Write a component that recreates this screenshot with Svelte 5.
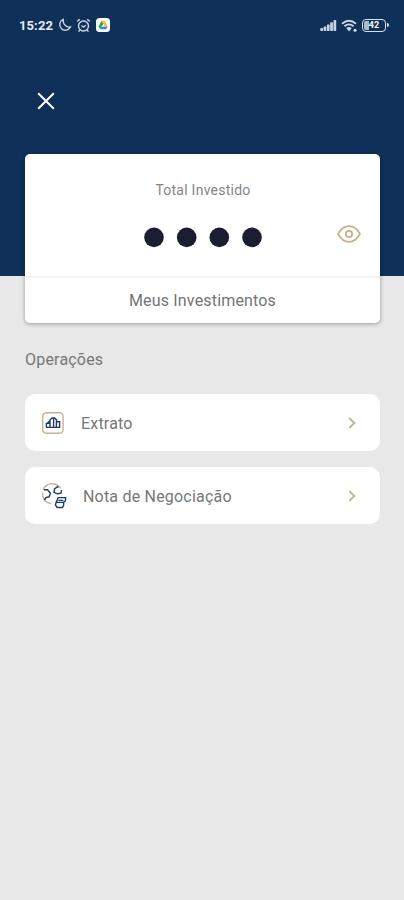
<script>
  let hidden = true;

  const dots = [10, 42.7, 75.3, 108];
  const operations = [
    { id: "extrato", label: "Extrato" },
    { id: "nota", label: "Nota de Negociação" },
  ];
</script>

<div class="screen">
  <header>
    <div class="status">
      <span class="time">15:22</span>
      <svg class="moon" width="14" height="14" viewBox="0 0 14 14">
        <path d="M5.2 1.4A5.6 5.6 0 1 0 12.4 9C9 9.8 4.6 6.8 5.2 1.4Z" />
      </svg>
      <svg class="alarm" width="15" height="15" viewBox="0 0 15 15">
        <circle cx="7.5" cy="8" r="5" />
        <path d="M1.2 3.4 3.8 1.4M13.8 3.4 11.2 1.4M5.5 7.5 7.4 9.2 9.8 7.3M3.8 12 2.6 13.6M11.2 12l1.2 1.6" />
      </svg>
      <svg class="drive" width="14" height="14" viewBox="0 0 14 14">
        <rect width="14" height="14" rx="3.5" fill="#fff" />
        <path d="M5.5 2.8 2.4 8.7 4.1 11.3 7.4 5.6Z" fill="#2fa35b" />
        <path d="M5.5 2.8H8.5L11.8 8.7H8.7Z" fill="#f9bd20" />
        <path d="M5.4 8.7H11.8L10.1 11.3H4.1Z" fill="#3e7fe8" />
      </svg>
      <div class="right">
        <svg class="signal" width="17" height="13" viewBox="0 0 17 13">
          <rect x="0.3" y="9" width="2.7" height="3" rx="0.7" />
          <rect x="3.6" y="7.5" width="2.7" height="4.5" rx="0.7" />
          <rect x="6.9" y="5.5" width="2.7" height="6.5" rx="0.7" />
          <rect x="10.2" y="3.3" width="2.7" height="8.7" rx="0.7" />
          <rect x="13.5" y="1" width="2.7" height="11" rx="0.7" />
        </svg>
        <svg class="wifi" width="17" height="14" viewBox="0 0 17 14">
          <path d="M1 4.8Q8 -1.3 15 4.8M3.4 7.3Q8 3.4 12.6 7.3M5.8 9.7Q8 8 10.2 9.7" />
          <path class="fill" d="M6 9.7h4L8 12.6Z" />
          <circle class="fill" cx="14" cy="11.3" r="1.5" />
        </svg>
        <div class="battery"><span>42</span></div>
      </div>
    </div>
    <button class="close" aria-label="Fechar">
      <svg width="18" height="18" viewBox="0 0 18 18">
        <path d="M1.2 1.2 16.8 16.8M16.8 1.2 1.2 16.8" />
      </svg>
    </button>
  </header>

  <main>
    <section class="card">
      <div class="total">
        <div class="total-label">Total Investido</div>
        <div class="amount">
          <svg class="dots" width="118" height="24" viewBox="0 0 118 24">
            {#if hidden}
              {#each dots as x}
                <circle cx={x} cy="12.4" r="9.8" />
              {/each}
            {/if}
          </svg>
          <button class="eye" aria-label="Mostrar saldo" on:click={() => (hidden = !hidden)}>
            <svg width="24" height="18" viewBox="0 0 24 18">
              <path d="M1 9C4 3.7 7.5 1.2 12 1.2S20 3.7 23 9C20 14.3 16.5 16.8 12 16.8S4 14.3 1 9Z" />
              <circle cx="12" cy="9" r="3.2" />
            </svg>
          </button>
        </div>
      </div>
      <div class="investments">Meus Investimentos</div>
    </section>

    <h2>Operações</h2>

    {#each operations as operation}
      <div class="row {operation.id}">
        {#if operation.id === "extrato"}
          <svg class="icon" width="24" height="24" viewBox="0 0 24 24">
            <rect class="gold" x="1.7" y="1.7" width="20.4" height="20.6" rx="3.8" />
            <path class="navy" d="M5.4 16.4V12.4H9V16.4M9 12.4V9L11 7H13.6L15.6 9V10.8M12.6 7.5V16.4M15.4 16.4V10.8H18.6V16.4H5M6.5 12 9 9.8" />
          </svg>
        {:else}
          <svg class="icon" width="26" height="27" viewBox="0 0 26 27">
            <path class="gold" d="M2 8C4 3.5 7 1.7 11 1.7C15 1.7 17.8 3.5 19.6 6.3M1.5 10.5C1.3 17 4.2 21 10.4 21.7" />
            <path class="navy" d="M3 7.8 6.6 7.8 9.4 11.4 8 14.8 5 15.6 3.4 18M17 4.3 13.6 7 13 10.4 16.5 11.8 20 11.2 20.5 8.2M15.4 5.4 17.5 4.8" />
            <path class="navy" d="M17.2 15.6H24.6L24.4 19.2 22.4 20.4H15.2ZM15.2 20.4 14.4 22.8 16.2 25.5H21.4L22.6 23.6V20.4M17.4 18.4H22.4" />
          </svg>
        {/if}
        <span>{operation.label}</span>
        <svg class="chevron" width="8" height="12" viewBox="0 0 8 12">
          <path d="M1.3 1 6.4 6 1.3 11" />
        </svg>
      </div>
    {/each}
  </main>
</div>

<style>
  :global(body) {
    background: #e8e8e8;
  }

  .screen {
    min-height: 900px;
    background: #e8e8e8;
    font-family: Roboto, sans-serif;
    color: #777;
  }

  header {
    height: 276px;
    background: #0f3058;
  }

  svg {
    display: block;
    flex: none;
    fill: none;
  }

  button {
    display: block;
    padding: 0;
    border: 0;
    background: none;
  }

  .status {
    display: flex;
    align-items: center;
    height: 18px;
    padding: 16px 15px 0 19px;
  }

  .time {
    width: 39px;
    color: #e8edf3;
    font-size: 13px;
    font-weight: 700;
    letter-spacing: 0.1px;
  }

  .moon,
  .alarm,
  .wifi {
    stroke: #cbd5e1;
    stroke-width: 1.4;
  }

  .alarm {
    margin-left: 4px;
  }

  .drive {
    margin-left: 5px;
  }

  .right {
    display: flex;
    align-items: center;
    margin-left: auto;
  }

  .signal {
    fill: #cbd5e1;
  }

  .wifi {
    margin: 1px 4px 0 4px;
    stroke-width: 1.8;
  }

  .fill {
    fill: #dce3ec;
    stroke: none;
  }

  .battery {
    position: relative;
    box-sizing: border-box;
    width: 24px;
    height: 13px;
    margin-right: 3px;
    padding: 1px;
    border: 1.5px solid #dce3ec;
    border-radius: 4px;
  }

  .battery::after {
    content: "";
    position: absolute;
    top: 3px;
    right: -4px;
    width: 2px;
    height: 4px;
    border-radius: 0 2px 2px 0;
    background: #dce3ec;
  }

  .battery span {
    display: block;
    height: 9px;
    border-radius: 2px;
    background: linear-gradient(90deg, #aebccc 25%, transparent 25%);
    color: #fff;
    font-size: 9px;
    font-weight: 700;
    line-height: 9px;
    text-align: center;
  }

  .close {
    margin: 58px 0 0 37px;
  }

  .close svg {
    stroke: #fff;
    stroke-width: 2;
  }

  main {
    margin-top: -122px;
    padding: 0 24px 0 25px;
  }

  .card {
    height: 169px;
    border-radius: 5px;
    background: #fff;
    box-shadow: 0 1px 4px rgba(0, 0, 0, 0.35);
  }

  .total {
    box-sizing: border-box;
    height: 124px;
    padding-top: 27px;
    border-bottom: 2px solid #f2f2f2;
  }

  .total-label {
    padding-left: 1px;
    color: #858585;
    font-size: 14px;
    line-height: 18px;
    letter-spacing: 0.25px;
    text-align: center;
  }

  .amount {
    display: grid;
    grid-template-columns: 1fr auto 1fr;
    align-items: center;
    margin-top: 26px;
  }

  .dots {
    grid-column: 2;
    fill: #1c1d31;
  }

  .eye {
    justify-self: end;
    margin: 0 19px 6px 0;
  }

  .eye svg {
    stroke: #c5b189;
    stroke-width: 1.7;
  }

  .investments {
    color: #747474;
    font-size: 16px;
    line-height: 45px;
    letter-spacing: 0.17px;
    text-align: center;
  }

  h2 {
    margin: 26px 0 24px;
    font-size: 16px;
    font-weight: 400;
    line-height: 21px;
    letter-spacing: 0.2px;
  }

  .row {
    display: flex;
    align-items: center;
    box-sizing: border-box;
    height: 57px;
    margin-bottom: 16px;
    padding: 0 24px 0 16px;
    border-radius: 10px;
    background: #fff;
    font-size: 16px;
    letter-spacing: 0.2px;
  }

  .row span {
    margin-left: 16px;
    padding-top: 2px;
  }

  .gold {
    stroke: #c8b48c;
    stroke-width: 1.4;
  }

  .navy {
    stroke: #1c3d66;
    stroke-width: 1.4;
  }

  .chevron {
    margin-left: auto;
    stroke: #bdb595;
    stroke-width: 1.8;
  }
</style>
